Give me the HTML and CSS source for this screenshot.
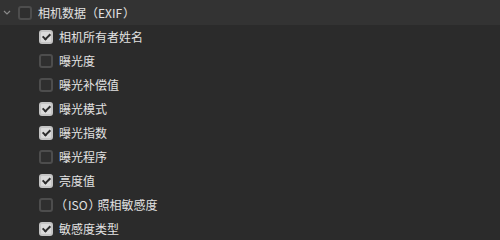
FILE: index.html
```html
<!DOCTYPE html>
<html lang="zh">
<head>
    <meta charset="UTF-8">
    <title>EXIF</title>
    <link rel="stylesheet" href="styles.css">
</head>
<body>
    <div class="group">
        <div class="group-header">
            <svg class="chevron" width="8" height="5" viewBox="0 0 8 5"><path d="M1 1 L4 4 L7 1" fill="none" stroke="#8a8a8a" stroke-width="1.2"/></svg>
            <span class="box"></span>
            <span class="label">相机数据（EXIF<span class="close">）</span></span>
        </div>
        <ul class="items">
            <li><span class="box checked"></span><span class="label">相机所有者姓名</span></li>
            <li><span class="box"></span><span class="label">曝光度</span></li>
            <li><span class="box"></span><span class="label">曝光补偿值</span></li>
            <li><span class="box checked"></span><span class="label">曝光模式</span></li>
            <li><span class="box checked"></span><span class="label">曝光指数</span></li>
            <li><span class="box"></span><span class="label">曝光程序</span></li>
            <li><span class="box checked"></span><span class="label">亮度值</span></li>
            <li><span class="box"></span><span class="label"><span class="open">（</span>ISO<span class="close">）</span>照相敏感度</span></li>
            <li><span class="box checked"></span><span class="label">敏感度类型</span></li>
        </ul>
    </div>
</body>
</html>
```

FILE: styles.css
```css
* {
    margin: 0;
    padding: 0;
    box-sizing: border-box;
}

body {
    background-color: #2b2b2b;
    color: #e2e2e2;
    font-family: "Noto Sans CJK SC", "Noto Sans", sans-serif;
    font-size: 12px;
}

.group-header {
    height: 25px;
    background-color: #333333;
    display: flex;
    align-items: center;
    padding-left: 3px;
}

.chevron {
    margin-right: 7px;
}

.items {
    list-style: none;
}

.items li {
    height: 24px;
    display: flex;
    align-items: center;
    padding-left: 39px;
}

.box {
    width: 14px;
    height: 14px;
    border: 2px solid #4d4d4d;
    border-radius: 3px;
    background-color: #2f2f2f;
    margin-right: 6px;
    flex-shrink: 0;
    position: relative;
}

.box.checked {
    background-color: #dadada;
    border-color: #c4c4c4;
}

.box.checked::after {
    content: "";
    position: absolute;
    left: 3px;
    top: 0px;
    width: 3px;
    height: 6px;
    border: solid #2b2b2b;
    border-width: 0 2px 2px 0;
    transform: rotate(45deg);
}

.label {
    line-height: 1;
}

.open {
    margin-left: -4px;
    margin-right: 1px;
}

.close {
    margin-left: 1px;
    letter-spacing: -3px;
}
```
